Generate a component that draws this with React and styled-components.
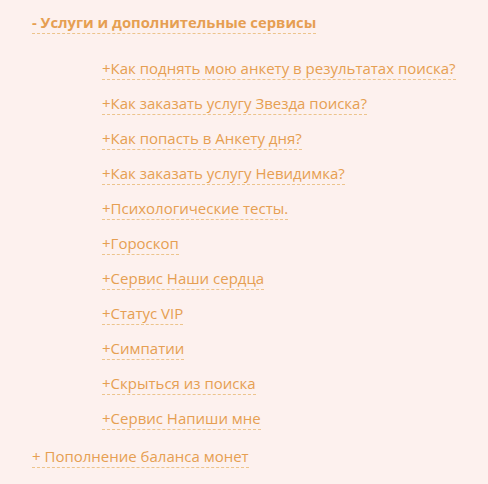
import React from "react";
import styled, { createGlobalStyle } from "styled-components";

const Global = createGlobalStyle`
  html, body { margin: 0; padding: 0; background: #fdf1ee; }
  body { font-family: "Open Sans", "DejaVu Sans", sans-serif; }
`;

const Page = styled.div`
  width: 488px;
  height: 484px;
  box-sizing: border-box;
  padding: 11px 0 0 32px;
  background: #fdf1ee;
`;

const Section = styled.div`
  display: flex;
  flex-direction: column;
  align-items: flex-start;
`;

const Toggle = styled.a`
  display: inline-block;
  color: #e69f52;
  font-size: ${(p) => (p.$open ? "14.8px" : "15px")};
  font-weight: ${(p) => (p.$open ? 700 : 400)};
  line-height: 22px;
  text-decoration: none;
  border-bottom: 1px dashed #edc48c;
  cursor: pointer;
`;

const List = styled.ul`
  list-style: none;
  margin: 0;
  padding: 24px 0 15px 70px;
  display: flex;
  flex-direction: column;
  gap: 13px;
`;

const Item = styled.li`
  display: flex;
`;

const Link = styled.a`
  color: #e69f52;
  font-size: 15px;
  line-height: 21px;
  text-decoration: none;
  border-bottom: 1px dashed #edc48c;
  cursor: pointer;
`;

const items = [
  "Как поднять мою анкету в результатах поиска?",
  "Как заказать услугу Звезда поиска?",
  "Как попасть в Анкету дня?",
  "Как заказать услугу Невидимка?",
  "Психологические тесты.",
  "Гороскоп",
  "Сервис Наши сердца",
  "Статус VIP",
  "Симпатии",
  "Скрыться из поиска",
  "Сервис Напиши мне",
];

export default function App() {
  return (
    <>
      <Global />
      <Page>
        <Section>
          <Toggle $open>- Услуги и дополнительные сервисы</Toggle>
          <List>
            {items.map((t) => (
              <Item key={t}>
                <Link>+{t}</Link>
              </Item>
            ))}
          </List>
          <Toggle>+ Пополнение баланса монет</Toggle>
        </Section>
      </Page>
    </>
  );
}
